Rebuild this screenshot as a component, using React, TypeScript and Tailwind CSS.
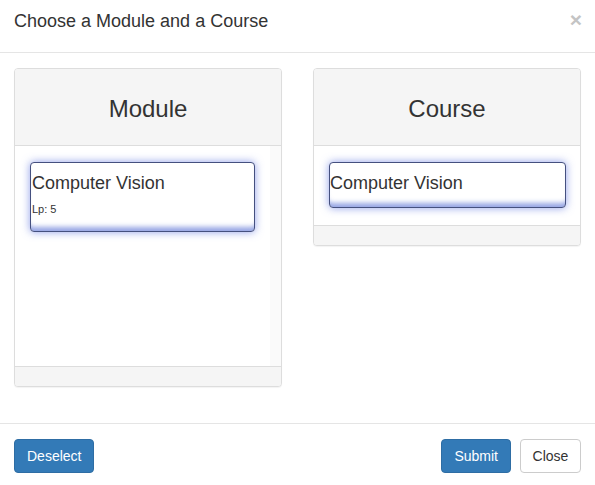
import React from 'react';

const font = { fontFamily: '"Liberation Sans", Arial, Helvetica, sans-serif' };

const cardClass =
  'rounded-[4px] border border-[#45507f] bg-white shadow-[0_0_8px_rgba(70,95,220,0.6),inset_0_-8px_5px_-4px_rgba(80,105,210,0.6)]';

const Panel: React.FC<{ title: string; bodyClass: string; children: React.ReactNode; gutter?: boolean }> = ({
  title,
  bodyClass,
  children,
  gutter = false
}) => (
  <div className="w-[268px] rounded-[4px] border border-[#dddddd] bg-white shadow-[0_1px_1px_rgba(0,0,0,0.05)] overflow-hidden">
    {/* Heading */}
    <div className="flex h-[77px] items-center justify-center border-b border-[#dddddd] bg-[#f5f5f5] pt-[3px]">
      <span className="text-[24px] leading-none text-[#333333]">{title}</span>
    </div>

    {/* Body */}
    <div className={`flex ${bodyClass}`}>
      <div className="flex-1 px-[15px] pt-[16px]">{children}</div>
      {gutter && <div className="w-[12px] bg-[#fafafa]" />}
    </div>

    {/* Footer */}
    <div className="h-[20px] border-t border-[#dddddd] bg-[#f5f5f5]" />
  </div>
);

export default function App() {
  return (
    <div className="h-[485px] w-[595px] overflow-hidden bg-white text-[#333333]" style={font}>
      {/* Header */}
      <div className="flex h-[53px] items-start justify-between border-b border-[#e5e5e5] px-[14px] pt-[9px]">
        <h4 className="text-[18px] leading-[25px]">Choose a Module and a Course</h4>
        <span className="mr-[-1px] mt-[-2px] text-[21px] font-bold leading-[25px] text-[#c4c4c4]">×</span>
      </div>

      {/* Body */}
      <div className="flex items-start justify-between px-[14px] pb-[36px] pt-[15px]">
        <Panel title="Module" bodyClass="h-[220px]" gutter>
          <div className={`${cardClass} h-[70px] w-[225px] pl-[1px] pt-[9px]`}>
            <div className="text-[18px] leading-[22px]">Computer Vision</div>
            <div className="mt-[7px] text-[11px] leading-[16px]">Lp: 5</div>
          </div>
        </Panel>

        <Panel title="Course" bodyClass="h-[79px]">
          <div className={`${cardClass} h-[46px] w-[237px] pt-[9px]`}>
            <div className="text-[18px] leading-[22px]">Computer Vision</div>
          </div>
        </Panel>
      </div>

      {/* Footer */}
      <div className="flex items-start justify-between border-t border-[#e5e5e5] px-[14px] pt-[15px]">
        <button className="h-[34px] rounded-[4px] border border-[#2e6da4] bg-[#337ab7] px-[12px] text-[14px] text-white">
          Deselect
        </button>
        <div className="flex gap-[9px]">
          <button className="h-[34px] rounded-[4px] border border-[#2e6da4] bg-[#337ab7] px-[12px] text-[14px] text-white">
            Submit
          </button>
          <button className="h-[34px] w-[61px] rounded-[4px] border border-[#cccccc] bg-white text-[14px] text-[#333333]">
            Close
          </button>
        </div>
      </div>
    </div>
  );
}
